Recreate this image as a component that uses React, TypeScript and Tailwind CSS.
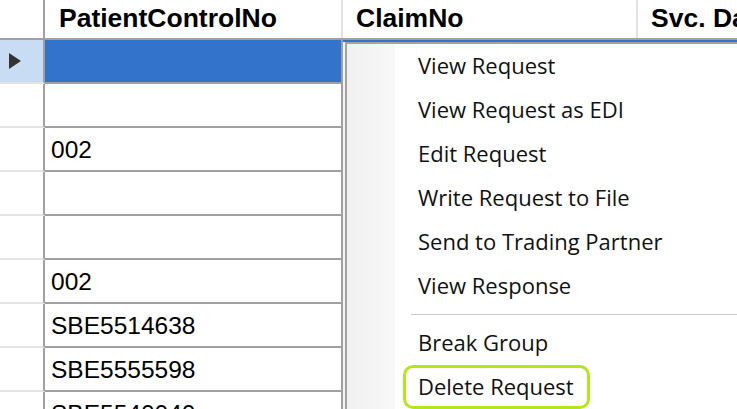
import React from "react";

const rows = ["", "", "002", "", "", "002", "SBE5514638", "SBE5555598", "SBE5540040"];

const menuItems: (string | null)[] = [
  "View Request",
  "View Request as EDI",
  "Edit Request",
  "Write Request to File",
  "Send to Trading Partner",
  "View Response",
  null,
  "Break Group",
  "Delete Request",
];

function GridHeader() {
  return (
    <div className="flex h-[40px] border-b-2 border-[#a0a0a0] bg-white font-['Liberation_Sans',Arial,sans-serif] text-[26.5px] font-bold text-black">
      <div className="w-[45px] shrink-0 border-r-2 border-[#a0a0a0]" />
      <div className="flex w-[298px] shrink-0 items-center border-r-2 border-[#e2e2e2] pl-[14px]">
        PatientControlNo
      </div>
      <div className="flex w-[295px] shrink-0 items-center border-r-2 border-[#e2e2e2] pl-[13px]">
        ClaimNo
      </div>
      <div className="flex shrink-0 items-center pl-[13px] whitespace-nowrap">Svc. Date</div>
    </div>
  );
}

function GridRow({ value, selected }: { value: string; selected: boolean }) {
  return (
    <div className="flex h-[44px] font-['Liberation_Sans',Arial,sans-serif] text-[24.5px] text-black">
      <div
        className={
          selected
            ? "flex w-[45px] shrink-0 items-center border-r-2 border-b-2 border-r-[#a0a0a0] border-b-[#e4e4e4] bg-[#c8ddf3] pl-[9px]"
            : "w-[45px] shrink-0 border-r-2 border-b-2 border-r-[#a0a0a0] border-b-[#e4e4e4] bg-white"
        }
      >
        {selected && (
          <svg width="12" height="16" viewBox="0 0 12 16">
            <polygon points="0,0 12,8 0,16" fill="#333" />
          </svg>
        )}
      </div>
      <div
        className={
          selected
            ? "flex w-[298px] shrink-0 items-center border-r-2 border-b-2 border-[#a0a0a0] bg-[#3373cc] pl-[6px] pt-[3px]"
            : "flex w-[298px] shrink-0 items-center border-r-2 border-b-2 border-[#a0a0a0] bg-white pl-[6px] pt-[3px]"
        }
      >
        {value}
      </div>
      <div
        className={
          selected
            ? "flex-1 border-b-2 border-[#a0a0a0] bg-[#3373cc]"
            : "flex-1 border-b-2 border-[#a0a0a0] bg-white"
        }
      />
    </div>
  );
}

function ContextMenu() {
  return (
    <div className="absolute left-[345px] top-[42px] flex h-[420px] w-[420px] border-2 border-[#a3a3a3] bg-white shadow-[-2px_0_0_#f3f3f3] font-['Segoe_UI','Open_Sans',sans-serif] text-[22px] text-[#111]">
      <div className="w-[48px] shrink-0 bg-gradient-to-r from-[#f0f0f0] to-[#f8f8f8]" />
      <div className="flex flex-1 flex-col">
        {menuItems.map((item, i) =>
          item === null ? (
            <div key={i} className="flex h-[13px] items-center pl-[16px]">
              <div className="h-[2px] w-full border-t border-b border-t-[#c8c8c8] border-b-white" />
            </div>
          ) : (
            <div key={i} className="flex h-[44px] items-center pl-[23px] pb-[2px] whitespace-nowrap">
              {item}
            </div>
          )
        )}
      </div>
    </div>
  );
}

export default function App() {
  return (
    <div className="relative h-[409px] w-[737px] overflow-hidden bg-white">
      <GridHeader />
      {rows.map((r, i) => (
        <GridRow key={i} value={r} selected={i === 0} />
      ))}
      <ContextMenu />
      <div className="absolute left-[403px] top-[365px] h-[44px] w-[187px] rounded-[10px] border-[3px] border-[#b5e61d]" />
    </div>
  );
}
